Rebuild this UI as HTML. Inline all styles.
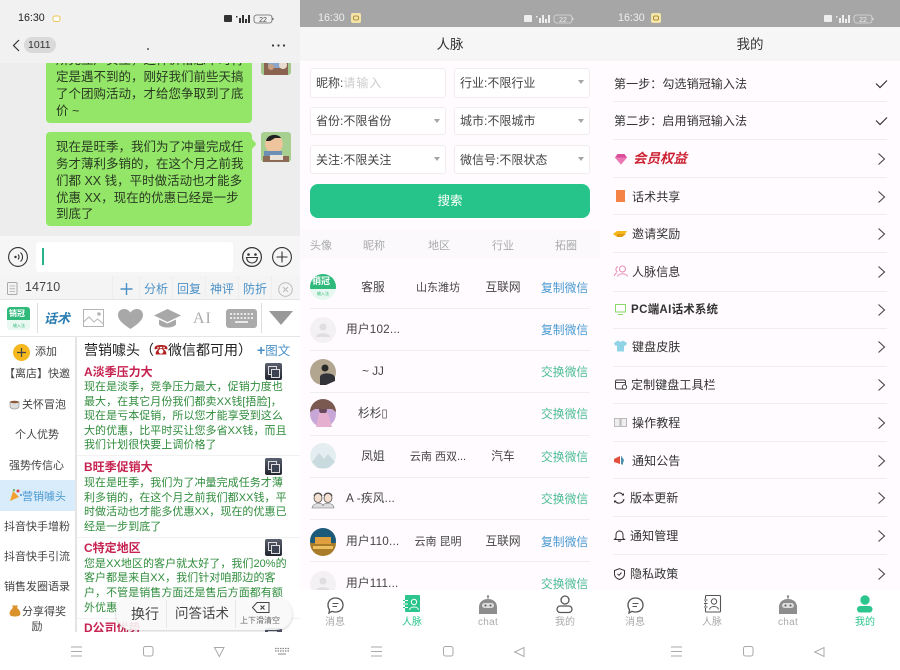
<!DOCTYPE html>
<html lang="zh"><head><meta charset="utf-8"><title>销冠输入法</title>
<style>
html,body{margin:0;padding:0;width:900px;height:670px;overflow:hidden;background:#fff}
body{font-family:"Liberation Sans","Noto Sans CJK SC",sans-serif;color:#333;position:relative;filter:blur(.35px)}
.p{position:absolute;top:0;height:670px;width:300px;overflow:hidden}
.a{position:absolute}
.t{position:absolute;white-space:nowrap;line-height:20px;height:20px}
.c{transform:translateX(-50%)}
svg{position:absolute;overflow:visible}
.l{position:absolute;height:1px;background:#eee}
.bx{position:absolute;background:#fff;border:1px solid #f0ecf0;border-radius:3px;box-sizing:border-box}
.ar{position:absolute;width:0;height:0;border-left:3.5px solid transparent;border-right:3.5px solid transparent;border-top:4px solid #a5a5a5}
.bub{position:absolute;left:46px;width:206px;background:#93e668;border-radius:4px}
.bt{font-size:12.5px;color:#2a3a22}
.g{font-size:11px;color:#2f8c3c;letter-spacing:.05px}
.r{font-size:12px;color:#c6224f;font-weight:bold}
.s{font-size:11px;color:#444}
.cp{position:absolute;left:265px;width:17px;height:17px;background:linear-gradient(#5a6070,#22252e);border-radius:2px}
.cp:after{content:"";position:absolute;left:3px;top:3px;width:7px;height:7px;border:1px solid #ddd}
.cp:before{content:"";position:absolute;left:6px;top:6px;width:7px;height:7px;border:1px solid #ddd;background:#3b4252;z-index:1}
.tb{font-size:12px;color:#4a90c6}
.m{font-size:11.7px;color:#444}
.w{font-size:11.8px}
.h{font-size:11px;color:#aaa}
.me{font-size:12px;color:#333;letter-spacing:.1px}
.tab{font-size:10px;color:#aaa}
.st{font-size:10.7px}
</style></head><body>

<!-- LEFT -->
<div class="p" style="left:0;background:#ededed">
 <div class="a" style="left:0;top:0;width:300px;height:63px;background:#f1f1f1"></div>
 <span class="t st" style="left:18px;top:8px;color:#222">16:30</span>
 <svg style="left:52px;top:15px" width="9" height="8"><rect x="1" y="1" width="7" height="5.500" rx="2" fill="#fff" stroke="#e8c454" stroke-width="1"/></svg>
 <svg style="left:224px;top:13px" width="54" height="11"><rect x="0" y="2" width="8" height="7" rx="1" fill="#333"/><rect x="12" y="3" width="1.500" height="1.500" fill="#333"/><rect x="15" y="5" width="2" height="5" fill="#333"/><rect x="18" y="2" width="2" height="8" fill="#333"/><rect x="21" y="6" width="2" height="4" fill="#333"/><rect x="24" y="2" width="2" height="8" fill="#333"/><rect x="30" y="2" width="18" height="8" rx="2.500" fill="none" stroke="#666" stroke-width=".8"/><rect x="48.500" y="5" width="1" height="2" fill="#666"/><text x="39" y="9" font-size="7" text-anchor="middle" fill="#444">22</text></svg>
 <svg style="left:12px;top:39px" width="8" height="13"><path d="M7 1L1.500 6.500L7 12" fill="none" stroke="#333" stroke-width="1.200"/></svg>
 <div class="a" style="left:24px;top:37px;width:32px;height:16px;background:#d9d9d9;border-radius:8px"></div>
 <span class="t" style="left:28px;top:35px;font-size:10.500px;color:#333">1011</span>
 <div class="a" style="left:147px;top:48px;width:2px;height:2px;background:#555;border-radius:1px"></div>
 <svg style="left:271px;top:44px" width="15" height="3"><circle cx="2" cy="1.500" r="1.100" fill="#333"/><circle cx="7.500" cy="1.500" r="1.100" fill="#333"/><circle cx="13" cy="1.500" r="1.100" fill="#333"/></svg>

 <div class="a" style="left:0;top:63px;width:300px;height:173px;overflow:hidden">
  <div class="bub" style="top:-12px;height:71.500px"></div>
  <div class="bub" style="top:69px;height:94px"></div>
  <span class="t bt" style="left:56px;top:-13px">所充立产实立，这样价格您平时肯</span>
  <span class="t bt" style="left:56px;top:4px">定是遇不到的，刚好我们前些天搞</span>
  <span class="t bt" style="left:56px;top:21px">了个团购活动，才给您争取到了底</span>
  <span class="t bt" style="left:56px;top:38px">价 ~</span>
  <span class="t bt" style="left:56px;top:74px">现在是旺季，我们为了冲量完成任</span>
  <span class="t bt" style="left:56px;top:91px">务才薄利多销的，在这个月之前我</span>
  <span class="t bt" style="left:56px;top:108px">们都 XX 钱，平时做活动也才能多</span>
  <span class="t bt" style="left:56px;top:125px">优惠 XX，现在的优惠已经是一步</span>
  <span class="t bt" style="left:56px;top:141px">到底了</span>
  <svg style="left:252px;top:76px" width="5" height="10"><path d="M0 0L4.500 5L0 10Z" fill="#93e668"/></svg>
  <!-- avatars -->
  <svg style="left:261px;top:-18px" width="30" height="30"><rect width="30" height="30" rx="3" fill="#a6c88f"/><rect x="3" y="10" width="24" height="20" fill="#8a6450"/><rect x="7" y="12" width="15" height="11" fill="#8aa7c9"/><circle cx="10" cy="22" r="3" fill="#c9a182"/><circle cx="22" cy="20" r="4" fill="#e8dccf"/></svg>
  <svg style="left:261px;top:69px" width="30" height="30"><rect width="30" height="30" rx="3" fill="#a6cf90"/><ellipse cx="13" cy="12" rx="9" ry="9" fill="#edc49b"/><path d="M5 9C6 2 17 1 20 6L14 6L9 9Z" fill="#222"/><rect x="3" y="19" width="18" height="8" fill="#6d8fb5"/><rect x="2" y="24" width="26" height="6" fill="#8c6a55"/><rect x="9" y="23" width="13" height="5" fill="#e9e2d6"/></svg>
 </div>

 <!-- input bar -->
 <div class="a" style="left:0;top:236px;width:300px;height:40px;background:#f6f6f6"></div>
 <div class="a" style="left:36px;top:242px;width:197px;height:30px;background:#fff;border-radius:3px"></div>
 <div class="a" style="left:42px;top:248px;width:1.500px;height:17px;background:#25b48a"></div>
 <svg style="left:8px;top:247px" width="20" height="20"><circle cx="10" cy="10" r="9.400" fill="none" stroke="#333" stroke-width="1.100"/><path d="M10 7.500A3.500 3.500 0 0 1 10 12.500M12.500 5.500A6 6 0 0 1 12.500 14.500" fill="none" stroke="#333" stroke-width="1.100"/><circle cx="7.500" cy="10" r="1.200" fill="#333"/></svg>
 <svg style="left:242px;top:247px" width="20" height="20"><circle cx="10" cy="10" r="9.400" fill="none" stroke="#333" stroke-width="1.200"/><circle cx="6.500" cy="7.500" r="1.300" fill="#333"/><circle cx="13.500" cy="7.500" r="1.300" fill="#333"/><path d="M4.500 10.500H15.500C15 14.500 12.500 16 10 16C7.500 16 5 14.500 4.500 10.500Z" fill="none" stroke="#333" stroke-width="1.100"/></svg>
 <svg style="left:272px;top:247px" width="20" height="20"><circle cx="10" cy="10" r="9.400" fill="none" stroke="#333" stroke-width="1.100"/><path d="M10 4.500V15.500M4.500 10H15.500" stroke="#333" stroke-width="1.100"/></svg>

 <!-- candidate bar -->
 <div class="a" style="left:0;top:276px;width:300px;height:24px;background:#f4f4f4"></div>
 <svg style="left:7px;top:282px" width="11" height="14"><rect x=".5" y=".5" width="9.500" height="12" rx="1" fill="none" stroke="#aaa"/><path d="M2.500 4H8M2.500 6.800H8M2.500 9.500H8" stroke="#aaa" stroke-width=".8"/></svg>
 <span class="t" style="left:25px;top:277px;font-size:12.500px;color:#444;letter-spacing:.1px">14710</span>
 <div class="a" style="left:112px;top:276px;width:1px;height:24px;background:#eee"></div>
 <div class="a" style="left:139px;top:276px;width:1px;height:24px;background:#eee"></div>
 <div class="a" style="left:172px;top:276px;width:1px;height:24px;background:#eee"></div>
 <div class="a" style="left:205px;top:276px;width:1px;height:24px;background:#eee"></div>
 <div class="a" style="left:238px;top:276px;width:1px;height:24px;background:#eee"></div>
 <div class="a" style="left:271px;top:276px;width:1px;height:24px;background:#eee"></div>
 <svg style="left:120px;top:283px" width="13" height="13"><path d="M6.500 0V12M.5 6H12.500" stroke="#4a90c6" stroke-width="1.400"/></svg>
 <span class="t tb" style="left:144px;top:279px">分析</span>
 <span class="t tb" style="left:177px;top:279px">回复</span>
 <span class="t tb" style="left:210px;top:279px">神评</span>
 <span class="t tb" style="left:243px;top:279px">防折</span>
 <svg style="left:278px;top:282px" width="15" height="15"><circle cx="7.500" cy="7.500" r="6.800" fill="none" stroke="#bbb"/><path d="M5 5L10 10M10 5L5 10" stroke="#bbb"/></svg>

 <!-- toolbar -->
 <div class="a" style="left:0;top:299px;width:300px;height:38px;background:#fff;border-top:1px solid #e5e5e5;border-bottom:1px solid #e5e5e5;box-sizing:border-box"></div>
 <div class="a" style="left:7px;top:307px;width:23px;height:23px;border-radius:3px;background:#e9f8f0;overflow:hidden"><div class="a" style="left:0;top:0;width:23px;height:13px;background:#2fb97a"></div><span class="t" style="left:2px;top:-3px;font-size:8px;color:#fff;font-weight:bold">销冠</span><span class="t" style="left:6px;top:9px;font-size:4px;color:#2fb97a">输入法</span></div>
 <div class="a" style="left:37px;top:303px;width:1px;height:30px;background:#ddd"></div>
 <span class="t" style="left:44px;top:309px;font-size:13px;color:#2c7eb2;font-weight:bold;font-style:italic">话术</span>
 <svg style="left:83px;top:309px" width="21" height="19"><rect x=".5" y=".5" width="20" height="17" fill="none" stroke="#b5b5b5"/><path d="M.5 13L6 8L11 13L14.500 10L20.500 15" fill="none" stroke="#b5b5b5"/><circle cx="16" cy="5" r="1.800" fill="#b5b5b5"/></svg>
 <svg style="left:118px;top:309px" width="25" height="20"><path d="M12.500 20C5 15 0 11 0 6C0 2 3 0 6 0C9 0 11 1.500 12.500 3.500C14 1.500 16 0 19 0C22 0 25 2 25 6C25 11 20 15 12.500 20Z" fill="#a8a8a8"/></svg>
 <svg style="left:154px;top:309px" width="27" height="20"><path d="M13.500 0L27 6.500L13.500 13L0 6.500Z" fill="#a8a8a8"/><path d="M5 10.500V15.500C8 19.500 19 19.500 22 15.500V10.500L13.500 14.500Z" fill="#a8a8a8"/></svg>
 <span class="t" style="left:193px;top:309px;font-size:16px;color:#aaa;font-family:'Liberation Serif',serif;letter-spacing:1px">AI</span>
 <div class="a" style="left:226px;top:309px;width:31px;height:19px;background:#aaa;border-radius:3px"></div>
 <svg style="left:229px;top:312px" width="25" height="13"><path d="M1 2H24M1 6H24" stroke="#e8e8e8" stroke-width="2" stroke-dasharray="2 1.500"/><path d="M6 10H19" stroke="#e8e8e8" stroke-width="2"/></svg>
 <div class="a" style="left:261px;top:303px;width:1px;height:30px;background:#ddd"></div>
 <svg style="left:269px;top:311px" width="24" height="14"><path d="M0 0H24L12 14Z" fill="#999"/></svg>

 <!-- sidebar & content -->
 <div class="a" style="left:0;top:337px;width:300px;height:295px;background:#fff;overflow:hidden">
  <div class="a" style="left:75px;top:0;width:2px;height:295px;background:#e4e4e4"></div>
  <div class="a" style="left:0;top:143px;width:75px;height:31px;background:#d9ecfb"></div>
  <div class="a" style="left:13px;top:7px;width:17px;height:17px;border-radius:9px;background:#f5b81f"></div>
  <svg style="left:17px;top:11px" width="9" height="9"><path d="M4.500 0V9M0 4.500H9" stroke="#444" stroke-width="1.200"/></svg>
  <span class="t s" style="left:35px;top:5px">添加</span>
  <span class="t s" style="left:4px;top:27px">【离店】快邀</span>
  <span class="t s" style="left:22px;top:58px">关怀冒泡</span>
  <svg style="left:9px;top:61px" width="12" height="12"><path d="M1 4H10V8C10 10 8 11 5.500 11C3 11 1 10 1 8Z" fill="#ddd" stroke="#999" stroke-width=".7"/><ellipse cx="5.500" cy="4" rx="4.500" ry="1.200" fill="#8a5a3a"/></svg>
  <span class="t s" style="left:15px;top:88px">个人优势</span>
  <span class="t s" style="left:9px;top:119px">强势传信心</span>
  <svg style="left:9px;top:151px" width="13" height="14"><path d="M1 13L4 3L10 9Z" fill="#f0a030"/><circle cx="9" cy="3" r="1.500" fill="#d44"/><circle cx="12" cy="7" r="1" fill="#48c"/><circle cx="5" cy="2" r="1" fill="#4a4"/></svg>
  <span class="t s" style="left:22px;top:150px;color:#4a9ad0">营销噱头</span>
  <span class="t s" style="left:4px;top:180px">抖音快手增粉</span>
  <span class="t s" style="left:4px;top:210px">抖音快手引流</span>
  <span class="t s" style="left:4px;top:240px">销售发圈语录</span>
  <svg style="left:9px;top:268px" width="12" height="13"><path d="M4 3L3 0.500H9L8 3C11 5 12 8 11 10C10 12 2 12 1 10C0 8 1 5 4 3Z" fill="#d9932a"/></svg>
  <span class="t s" style="left:22px;top:265px">分享得奖</span>
  <span class="t s c" style="left:37px;top:280px">励</span>

  <span class="t" style="left:84px;top:3px;font-size:14px;color:#222">营销噱头（<span style="color:#b02020">☎</span>微信都可用）</span>
  <span class="t" style="left:257px;top:3px;font-size:12.500px;color:#4a90c6"><b style="font-size:14px">+</b>图文</span>

  <span class="t r" style="left:84px;top:25px">A淡季压力大</span>
  <div class="cp" style="top:26px"></div>
  <span class="t g" style="left:84px;top:40px">现在是淡季，竞争压力最大，促销力度也</span>
  <span class="t g" style="left:84px;top:55px">最大，在其它月份我们都卖XX钱[捂脸]，</span>
  <span class="t g" style="left:84px;top:69px">现在是亏本促销，所以您才能享受到这么</span>
  <span class="t g" style="left:84px;top:84px">大的优惠，比平时买让您多省XX钱，而且</span>
  <span class="t g" style="left:84px;top:98px">我们计划很快要上调价格了</span>
  <div class="l" style="left:77px;top:118px;width:223px;background:#f2f2f2"></div>

  <span class="t r" style="left:84px;top:120px">B旺季促销大</span>
  <div class="cp" style="top:121px"></div>
  <span class="t g" style="left:84px;top:136px">现在是旺季，我们为了冲量完成任务才薄</span>
  <span class="t g" style="left:84px;top:151px">利多销的，在这个月之前我们都XX钱，平</span>
  <span class="t g" style="left:84px;top:165px">时做活动也才能多优惠XX，现在的优惠已</span>
  <span class="t g" style="left:84px;top:180px">经是一步到底了</span>
  <div class="l" style="left:77px;top:200px;width:223px;background:#f2f2f2"></div>

  <span class="t r" style="left:84px;top:201px">C特定地区</span>
  <div class="cp" style="top:202px"></div>
  <span class="t g" style="left:84px;top:217px">您是XX地区的客户就太好了，我们20%的</span>
  <span class="t g" style="left:84px;top:231px">客户都是来自XX，我们针对咱那边的客</span>
  <span class="t g" style="left:84px;top:246px">户，不管是销售方面还是售后方面都有额</span>
  <span class="t g" style="left:84px;top:261px">外优惠</span>
  <div class="l" style="left:77px;top:281px;width:223px;background:#f2f2f2"></div>

  <span class="t r" style="left:84px;top:281px">D公司优势</span>
  <div class="cp" style="top:291px"></div>

  <div class="a" style="left:116px;top:261px;width:176px;height:32px;background:rgba(248,248,248,.9);border-radius:16px;box-shadow:0 1px 3px rgba(0,0,0,.2)"></div>
  <div class="a" style="left:166px;top:263px;width:1px;height:28px;background:#e8e8e8"></div>
  <div class="a" style="left:235px;top:263px;width:1px;height:28px;background:#e8e8e8"></div>
  <span class="t" style="left:131px;top:267px;font-size:14px;color:#444">换行</span>
  <span class="t" style="left:175px;top:267px;font-size:13.500px;color:#444">问答话术</span>
  <svg style="left:252px;top:265px" width="18" height="11"><path d="M5 .5H17V10.500H5L.5 5.500Z" fill="none" stroke="#444" stroke-width="1"/><path d="M8.500 3.500L12.500 7.500M12.500 3.500L8.500 7.500" stroke="#444" stroke-width="1.200"/></svg>
  <span class="t c" style="left:260px;top:274px;font-size:8px;color:#666">上下滑清空</span>
 </div>

 <!-- nav -->
 <div class="a" style="left:0;top:632px;width:300px;height:38px;background:#fff"></div>
 <svg style="left:70px;top:646px" width="13" height="11"><path d="M1 1H12M1 5.500H12M1 10H12" stroke="#aaa" stroke-width="1"/></svg>
 <svg style="left:143px;top:646px" width="11" height="11"><rect x=".5" y=".5" width="9.500" height="9.500" rx="2" fill="none" stroke="#aaa"/></svg>
 <svg style="left:214px;top:647px" width="11" height="10"><path d="M.5 .5H10L5.300 9.500Z" fill="none" stroke="#aaa"/></svg>
 <svg style="left:275px;top:647px" width="14" height="8"><path d="M0 1.500H14M0 4H14" stroke="#888" stroke-width="1.300" stroke-dasharray="1.500 1"/><path d="M3 7H11" stroke="#888"/></svg>
</div>

<!-- MIDDLE -->
<div class="p" style="left:300px;background:#fffbfe">
 <div class="a" style="left:0;top:0;width:300px;height:27px;background:#a6a6a6"></div>
 <div class="a" style="left:0;top:27px;width:300px;height:34px;background:#f6f6f6"></div>
 <span class="t st" style="left:18px;top:8px;color:#eee">16:30</span>
 <svg style="left:51px;top:13px" width="11" height="11"><rect x="0" y="0" width="10" height="10" rx="2" fill="#f5e4a8"/><rect x="2.500" y="3" width="5" height="4" rx="1.500" fill="none" stroke="#9a7a20" stroke-width=".8"/></svg>
 <svg style="left:224px;top:13px" width="54" height="11"><rect x="0" y="2" width="8" height="7" rx="1" fill="#eee"/><rect x="12" y="3" width="1.500" height="1.500" fill="#eee"/><rect x="15" y="5" width="2" height="5" fill="#eee"/><rect x="18" y="2" width="2" height="8" fill="#eee"/><rect x="21" y="6" width="2" height="4" fill="#eee"/><rect x="24" y="2" width="2" height="8" fill="#eee"/><rect x="30" y="2" width="18" height="8" rx="2.500" fill="none" stroke="#ddd" stroke-width=".8"/><rect x="48.500" y="5" width="1" height="2" fill="#ddd"/><text x="39" y="9" font-size="7" text-anchor="middle" fill="#eee">22</text></svg>
 <span class="t c" style="left:150px;top:35px;font-size:13.500px;color:#333">人脉</span>

 <div class="bx" style="left:10px;top:68px;width:136px;height:30px"></div>
 <div class="bx" style="left:154px;top:68px;width:136px;height:30px"></div>
 <div class="bx" style="left:10px;top:107px;width:136px;height:28px"></div>
 <div class="bx" style="left:154px;top:107px;width:136px;height:28px"></div>
 <div class="bx" style="left:10px;top:145px;width:136px;height:29px"></div>
 <div class="bx" style="left:154px;top:145px;width:136px;height:29px"></div>
 <span class="t" style="left:16px;top:73px;font-size:12px;color:#444">昵称:<span style="color:#ccc;letter-spacing:1px">请输入</span></span>
 <span class="t" style="left:160px;top:73px;font-size:12px;color:#444">行业:不限行业</span>
 <span class="t" style="left:16px;top:111px;font-size:12px;color:#444">省份:不限省份</span>
 <span class="t" style="left:160px;top:111px;font-size:12px;color:#444">城市:不限城市</span>
 <span class="t" style="left:16px;top:150px;font-size:12px;color:#444">关注:不限关注</span>
 <span class="t" style="left:160px;top:150px;font-size:12px;color:#444">微信号:不限状态</span>
 <div class="ar" style="left:278px;top:80px"></div>
 <div class="ar" style="left:134px;top:119px"></div>
 <div class="ar" style="left:278px;top:119px"></div>
 <div class="ar" style="left:134px;top:157px"></div>
 <div class="ar" style="left:278px;top:157px"></div>
 <div class="a" style="left:10px;top:184px;width:280px;height:34px;background:#26c48b;border-radius:8px"></div>
 <span class="t c" style="left:150px;top:191px;font-size:12.500px;color:#fff">搜索</span>

 <div class="a" style="left:0;top:229px;width:300px;height:30px;background:#fbf9fc"></div>
 <span class="t h c" style="left:21px;top:236px">头像</span>
 <span class="t h c" style="left:74px;top:236px">昵称</span>
 <span class="t h c" style="left:139px;top:236px">地区</span>
 <span class="t h c" style="left:203px;top:236px">行业</span>
 <span class="t h c" style="left:266px;top:236px">拓圈</span>

 <div class="l" style="left:10px;top:308px;width:280px"></div>
 <div class="l" style="left:10px;top:350px;width:280px"></div>
 <div class="l" style="left:10px;top:392px;width:280px"></div>
 <div class="l" style="left:10px;top:435px;width:280px"></div>
 <div class="l" style="left:10px;top:477px;width:280px"></div>
 <div class="l" style="left:10px;top:519px;width:280px"></div>
 <div class="l" style="left:10px;top:561px;width:280px"></div>

 <!-- avatars -->
 <div class="a" style="left:10px;top:274px;width:26px;height:26px;border-radius:13px;background:#e6f8ef;overflow:hidden"><div class="a" style="left:0;top:0;width:26px;height:15px;background:#2fb97a"></div><span class="t" style="left:2px;top:-3px;font-size:9px;font-weight:bold;color:#fff">销冠</span><span class="t" style="left:7px;top:10px;font-size:4px;color:#2fb97a">输入法</span></div>
 <svg style="left:10px;top:317px" width="26" height="26"><circle cx="13" cy="13" r="13" fill="#f3f1f3"/><circle cx="13" cy="10" r="3.500" fill="#e0dee0"/><path d="M6 20C6 15 20 15 20 20Z" fill="#e0dee0"/></svg>
 <svg style="left:10px;top:359px" width="26" height="26"><circle cx="13" cy="13" r="13" fill="#b2a691"/><circle cx="15" cy="9" r="3.500" fill="#2a2a2a"/><path d="M10 26V18C10 13 25 13 25 19V22L16 26Z" fill="#33343a"/></svg>
 <svg style="left:10px;top:401px" width="26" height="26"><circle cx="13" cy="13" r="13" fill="#c7a7d8"/><circle cx="13" cy="9" r="4" fill="#6a4a5a"/><path d="M6 26L9 12H18L22 26Z" fill="#e5b0d0"/><path d="M0 11A13 13 0 0 1 26 11L22 8H5Z" fill="#7a5a50"/></svg>
 <svg style="left:10px;top:443px" width="26" height="26"><circle cx="13" cy="13" r="13" fill="#e4eef0"/><path d="M2 19L9 10L14 16L18 11L25 19L18 25H8Z" fill="#c9dadf"/></svg>
 <svg style="left:10px;top:486px" width="26" height="26"><ellipse cx="8" cy="12" rx="4" ry="4.500" fill="#f4e0d0" stroke="#555" stroke-width=".8"/><ellipse cx="18" cy="12" rx="4" ry="4.500" fill="#f4e0d0" stroke="#555" stroke-width=".8"/><path d="M2 22C3 16 13 16 13 20C13 16 24 16 24 22Z" fill="#ddd" stroke="#777" stroke-width=".6"/><path d="M4 10C5 6 11 6 12 10M14 10C15 6 21 6 22 10" stroke="#555" fill="none"/></svg>
 <svg style="left:10px;top:528px" width="26" height="26"><circle cx="13" cy="13" r="13" fill="#1b5a78"/><path d="M0 15H26A13 13 0 0 1 0 15Z" fill="#a97c2a"/><rect x="5" y="9" width="16" height="7" fill="#e0a040"/><rect x="3" y="18" width="20" height="3" fill="#ecc060"/></svg>
 <svg style="left:10px;top:571px" width="26" height="26"><circle cx="13" cy="13" r="13" fill="#f3f1f3"/><circle cx="13" cy="10" r="3.500" fill="#e0dee0"/><path d="M6 20C6 15 20 15 20 20Z" fill="#e0dee0"/></svg>

 <span class="t m c" style="left:73px;top:278px">客服</span><span class="t m c" style="left:138px;top:278px;font-size:11px">山东潍坊</span><span class="t m c" style="left:203px;top:278px">互联网</span><span class="t w" style="left:241px;top:278px;color:#4a9ad0">复制微信</span>
 <span class="t m" style="left:46px;top:320px;letter-spacing:.2px">用户102...</span><span class="t w" style="left:241px;top:320px;color:#4a9ad0">复制微信</span>
 <span class="t m c" style="left:73px;top:362px">~ JJ</span><span class="t w" style="left:241px;top:362px;color:#4cbd95">交换微信</span>
 <span class="t m" style="left:58px;top:404px">杉杉▯</span><span class="t w" style="left:241px;top:404px;color:#4cbd95">交换微信</span>
 <span class="t m c" style="left:73px;top:447px">凤姐</span><span class="t m c" style="left:138px;top:447px;font-size:11px">云南 西双...</span><span class="t m c" style="left:203px;top:447px">汽车</span><span class="t w" style="left:241px;top:447px;color:#4cbd95">交换微信</span>
 <span class="t m" style="left:46px;top:489px;letter-spacing:.2px">A -疾风...</span><span class="t w" style="left:241px;top:489px;color:#4cbd95">交换微信</span>
 <span class="t m" style="left:46px;top:532px;letter-spacing:.2px">用户110...</span><span class="t m c" style="left:138px;top:532px;font-size:11px">云南 昆明</span><span class="t m c" style="left:203px;top:532px">互联网</span><span class="t w" style="left:241px;top:532px;color:#4a9ad0">复制微信</span>
 <span class="t m" style="left:46px;top:574px;letter-spacing:.2px">用户111...</span><span class="t w" style="left:241px;top:574px;color:#4cbd95">交换微信</span>

 <!-- tab bar -->
 <div class="a" style="left:0;top:590px;width:300px;height:80px;background:#fff"></div>
 <svg style="left:27px;top:597px" width="17" height="17"><path d="M8.500 1C13 1 16 4 16 8C16 12 13 15 8.500 15C7 15 6 14.800 5 14.300L2 16L2.500 12.800C1.500 11.500 1 9.800 1 8C1 4 4 1 8.500 1Z" fill="none" stroke="#555" stroke-width="1.300"/><path d="M5.500 6.500H11.500M5.500 9.500H10" stroke="#555" stroke-width="1.100"/></svg>
 <span class="t tab c" style="left:35px;top:613px">消息</span>
 <div class="a" style="left:105px;top:595px;width:15px;height:17px;background:#2bc58d;border-radius:1px"></div>
 <svg style="left:103px;top:597px" width="17" height="15"><circle cx="11" cy="5" r="2.700" fill="none" stroke="#fff" stroke-width="1"/><path d="M6.500 13C7 9 15 9 15.500 13" fill="none" stroke="#fff" stroke-width="1"/><path d="M0 3.500H4M0 7H4M0 10.500H4" stroke="#2bc58d" stroke-width="1.100"/><path d="M2 3.500H5M2 7H5M2 10.500H5" stroke="#fff" stroke-width=".9"/></svg>
 <span class="t tab c" style="left:112px;top:613px;color:#2bc58d">人脉</span>
 <svg style="left:178px;top:595px" width="20" height="20"><circle cx="10" cy="1.500" r="1.200" fill="#888"/><path d="M10 2V5" stroke="#888"/><path d="M1 19V12C1 7 5 4 10 4C15 4 19 7 19 12V19Z" fill="#8d8d8d"/><rect x="4" y="8" width="12" height="5" rx="2.500" fill="#dcdcdc"/><circle cx="7.500" cy="10.500" r="1" fill="#555"/><circle cx="12.500" cy="10.500" r="1" fill="#555"/></svg>
 <span class="t tab c" style="left:188px;top:613px;letter-spacing:.3px">chat</span>
 <svg style="left:256px;top:595px" width="18" height="19"><circle cx="9" cy="5" r="4" fill="none" stroke="#555" stroke-width="1.300"/><rect x="1" y="11" width="15" height="6.500" rx="3.200" fill="none" stroke="#555" stroke-width="1.300"/></svg>
 <span class="t tab c" style="left:265px;top:613px">我的</span>

 <svg style="left:70px;top:646px" width="13" height="11"><path d="M1 1H12M1 5.500H12M1 10H12" stroke="#aaa"/></svg>
 <svg style="left:143px;top:646px" width="11" height="11"><rect x=".5" y=".5" width="9.500" height="9.500" rx="2" fill="none" stroke="#aaa"/></svg>
 <svg style="left:214px;top:647px" width="11" height="10"><path d="M10 .5V9.500L.7 5Z" fill="none" stroke="#aaa"/></svg>
</div>

<!-- RIGHT -->
<div class="p" style="left:600px;background:#fffbfe">
 <div class="a" style="left:0;top:0;width:300px;height:27px;background:#a6a6a6"></div>
 <div class="a" style="left:0;top:27px;width:300px;height:34px;background:#f6f6f6"></div>
 <span class="t st" style="left:18px;top:8px;color:#eee">16:30</span>
 <svg style="left:51px;top:13px" width="11" height="11"><rect x="0" y="0" width="10" height="10" rx="2" fill="#f5e4a8"/><rect x="2.500" y="3" width="5" height="4" rx="1.500" fill="none" stroke="#9a7a20" stroke-width=".8"/></svg>
 <svg style="left:224px;top:13px" width="54" height="11"><rect x="0" y="2" width="8" height="7" rx="1" fill="#eee"/><rect x="12" y="3" width="1.500" height="1.500" fill="#eee"/><rect x="15" y="5" width="2" height="5" fill="#eee"/><rect x="18" y="2" width="2" height="8" fill="#eee"/><rect x="21" y="6" width="2" height="4" fill="#eee"/><rect x="24" y="2" width="2" height="8" fill="#eee"/><rect x="30" y="2" width="18" height="8" rx="2.500" fill="none" stroke="#ddd" stroke-width=".8"/><rect x="48.500" y="5" width="1" height="2" fill="#ddd"/><text x="39" y="9" font-size="7" text-anchor="middle" fill="#eee">22</text></svg>
 <span class="t c" style="left:150px;top:35px;font-size:13.500px;color:#333">我的</span>

 <div class="l" style="left:13px;top:101px;width:274px"></div>
 <div class="l" style="left:13px;top:139px;width:274px"></div>
 <div class="l" style="left:13px;top:177px;width:274px"></div>
 <div class="l" style="left:13px;top:214px;width:274px"></div>
 <div class="l" style="left:13px;top:252px;width:274px"></div>
 <div class="l" style="left:13px;top:291px;width:274px"></div>
 <div class="l" style="left:13px;top:328px;width:274px"></div>
 <div class="l" style="left:13px;top:366px;width:274px"></div>
 <div class="l" style="left:13px;top:403px;width:274px"></div>
 <div class="l" style="left:13px;top:441px;width:274px"></div>
 <div class="l" style="left:13px;top:478px;width:274px"></div>
 <div class="l" style="left:13px;top:516px;width:274px"></div>
 <div class="l" style="left:13px;top:554px;width:274px"></div>

 <span class="t me" style="left:14px;top:74px">第一步：勾选销冠输入法</span>
 <span class="t me" style="left:14px;top:111px">第二步：启用销冠输入法</span>
 <span class="t" style="left:33px;top:149px;font-size:13.500px;font-weight:bold;font-style:italic;color:#cc2233">会员权益</span>
 <span class="t me" style="left:32px;top:187px">话术共享</span>
 <span class="t me" style="left:32px;top:224px">邀请奖励</span>
 <span class="t me" style="left:32px;top:262px">人脉信息</span>
 <span class="t me" style="left:31px;top:300px;font-weight:bold;font-size:11.500px"><span style="letter-spacing:.4px">PC</span>端<span style="letter-spacing:.4px">AI</span>话术系统</span>
 <span class="t me" style="left:32px;top:337px">键盘皮肤</span>
 <span class="t me" style="left:31px;top:375px">定制键盘工具栏</span>
 <span class="t me" style="left:32px;top:413px">操作教程</span>
 <span class="t me" style="left:32px;top:451px">通知公告</span>
 <span class="t me" style="left:30px;top:488px">版本更新</span>
 <span class="t me" style="left:30px;top:526px">通知管理</span>
 <span class="t me" style="left:30px;top:564px">隐私政策</span>

 <!-- check marks -->
 <svg style="left:275px;top:79px" width="13" height="10"><path d="M1 4.500L5 8.500L12 1.500" fill="none" stroke="#333" stroke-width="1.200"/></svg>
 <svg style="left:275px;top:116px" width="13" height="10"><path d="M1 4.500L5 8.500L12 1.500" fill="none" stroke="#333" stroke-width="1.200"/></svg>
 <!-- chevrons -->
 <svg style="left:277px;top:152px" width="9" height="14"><path d="M1.500 1.500L7.500 7L1.500 12.500" fill="none" stroke="#444" stroke-width="1.100"/></svg>
 <svg style="left:277px;top:190px" width="9" height="14"><path d="M1.500 1.500L7.500 7L1.500 12.500" fill="none" stroke="#444" stroke-width="1.100"/></svg>
 <svg style="left:277px;top:227px" width="9" height="14"><path d="M1.500 1.500L7.500 7L1.500 12.500" fill="none" stroke="#444" stroke-width="1.100"/></svg>
 <svg style="left:277px;top:265px" width="9" height="14"><path d="M1.500 1.500L7.500 7L1.500 12.500" fill="none" stroke="#444" stroke-width="1.100"/></svg>
 <svg style="left:277px;top:303px" width="9" height="14"><path d="M1.500 1.500L7.500 7L1.500 12.500" fill="none" stroke="#444" stroke-width="1.100"/></svg>
 <svg style="left:277px;top:340px" width="9" height="14"><path d="M1.500 1.500L7.500 7L1.500 12.500" fill="none" stroke="#444" stroke-width="1.100"/></svg>
 <svg style="left:277px;top:378px" width="9" height="14"><path d="M1.500 1.500L7.500 7L1.500 12.500" fill="none" stroke="#444" stroke-width="1.100"/></svg>
 <svg style="left:277px;top:416px" width="9" height="14"><path d="M1.500 1.500L7.500 7L1.500 12.500" fill="none" stroke="#444" stroke-width="1.100"/></svg>
 <svg style="left:277px;top:454px" width="9" height="14"><path d="M1.500 1.500L7.500 7L1.500 12.500" fill="none" stroke="#444" stroke-width="1.100"/></svg>
 <svg style="left:277px;top:491px" width="9" height="14"><path d="M1.500 1.500L7.500 7L1.500 12.500" fill="none" stroke="#444" stroke-width="1.100"/></svg>
 <svg style="left:277px;top:529px" width="9" height="14"><path d="M1.500 1.500L7.500 7L1.500 12.500" fill="none" stroke="#444" stroke-width="1.100"/></svg>
 <svg style="left:277px;top:567px" width="9" height="14"><path d="M1.500 1.500L7.500 7L1.500 12.500" fill="none" stroke="#444" stroke-width="1.100"/></svg>

 <!-- row icons -->
 <svg style="left:15px;top:153px" width="12" height="12"><path d="M2.500 1H9.500L12 4.500L6 11.500L0 4.500Z" fill="#d94d9a"/><path d="M0 4.500H12L6 11.500Z" fill="#ea76b4"/></svg>
 <div class="a" style="left:16px;top:190px;width:9px;height:12px;background:#f58345"></div>
 <svg style="left:13px;top:229px" width="15" height="10"><path d="M0 5L4 2H14L12 5L9 8H4Z" fill="#f4b71c"/><path d="M4 5H13L9 8H4Z" fill="#e09a10"/></svg>
 <svg style="left:14px;top:265px" width="14" height="12"><circle cx="8.500" cy="4" r="3" fill="none" stroke="#ea8cb2" stroke-width="1"/><path d="M3.500 11.500C4 8 13 8 13.500 11.500" fill="none" stroke="#ea8cb2" stroke-width="1"/><path d="M4 1.500A3 3 0 0 0 3.500 7M.5 11C.5 9 2 8 3 8" fill="none" stroke="#ea8cb2" stroke-width="1"/></svg>
 <svg style="left:15px;top:304px" width="11" height="11"><rect x=".5" y=".5" width="10" height="7.500" fill="none" stroke="#8bd96b" stroke-width="1"/><path d="M3 10.500H8" stroke="#8bd96b" stroke-width="1"/></svg>
 <svg style="left:14px;top:340px" width="13" height="12"><path d="M4 .5L6.500 2L9 .5L13 3L11.500 6L10 5.500V11.500H3V5.500L1.500 6L0 3Z" fill="#8fd4e6"/></svg>
 <svg style="left:15px;top:379px" width="13" height="11"><rect x=".5" y="1" width="10" height="9" rx="1.500" fill="none" stroke="#444"/><path d="M.5 3.500H10.500" stroke="#444"/><circle cx="9.500" cy="8" r="2.200" fill="#fff" stroke="#444"/></svg>
 <svg style="left:14px;top:418px" width="13" height="9"><path d="M.5 .5H6V8.500H.5ZM7 .5H12.500V8.500H7Z" fill="#eee" stroke="#aaa" stroke-width=".8"/></svg>
 <svg style="left:14px;top:455px" width="13" height="11"><path d="M0 4L6 1V9L0 7Z" fill="#e2503d"/><path d="M7 .5L10 5L8.500 10L7 9Z" fill="#4a8ea8"/></svg>
 <svg style="left:13px;top:492px" width="12" height="12"><path d="M1 5A5 5 0 0 1 10 3M11 7A5 5 0 0 1 2 9" fill="none" stroke="#333" stroke-width="1.100"/><path d="M8.500 3.500L11 3.500L11 1ZM3.500 8.500L1 8.500L1 11Z" fill="#333"/></svg>
 <svg style="left:14px;top:530px" width="11" height="12"><path d="M5.500 1C8 1 9 3 9 5V8L10.500 9.500H.5L2 8V5C2 3 3 1 5.500 1Z" fill="none" stroke="#333"/><path d="M4 10.500C4.500 11.500 6.500 11.500 7 10.500" fill="none" stroke="#333"/></svg>
 <svg style="left:14px;top:568px" width="11" height="12"><path d="M5.500 .7L10.500 2.500V6C10.500 9 8 10.700 5.500 11.500C3 10.700 .5 9 .5 6V2.500Z" fill="none" stroke="#333"/><path d="M3.500 5.800L5 7.300L7.500 4.600" fill="none" stroke="#333"/></svg>

 <!-- tab bar -->
 <div class="a" style="left:0;top:590px;width:300px;height:80px;background:#fff"></div>
 <svg style="left:27px;top:597px" width="17" height="17"><path d="M8.500 1C13 1 16 4 16 8C16 12 13 15 8.500 15C7 15 6 14.800 5 14.300L2 16L2.500 12.800C1.500 11.500 1 9.800 1 8C1 4 4 1 8.500 1Z" fill="none" stroke="#555" stroke-width="1.300"/><path d="M5.500 6.500H11.500M5.500 9.500H10" stroke="#555" stroke-width="1.100"/></svg>
 <span class="t tab c" style="left:35px;top:613px">消息</span>
 <svg style="left:103px;top:595px" width="18" height="18"><rect x="2.500" y=".5" width="15" height="16.500" rx="1" fill="none" stroke="#555" stroke-width="1.100"/><circle cx="11" cy="6.500" r="2.700" fill="none" stroke="#555"/><path d="M6.500 14.500C7 10.500 15 10.500 15.500 14.500" fill="none" stroke="#555"/><path d="M0 5H5M0 8.500H5M0 12H5" stroke="#fff" stroke-width="2"/><path d="M1 5H4.500M1 8.500H4.500M1 12H4.500" stroke="#555"/></svg>
 <span class="t tab c" style="left:112px;top:613px">人脉</span>
 <svg style="left:178px;top:595px" width="20" height="20"><circle cx="10" cy="1.500" r="1.200" fill="#888"/><path d="M10 2V5" stroke="#888"/><path d="M1 19V12C1 7 5 4 10 4C15 4 19 7 19 12V19Z" fill="#8d8d8d"/><rect x="4" y="8" width="12" height="5" rx="2.500" fill="#dcdcdc"/><circle cx="7.500" cy="10.500" r="1" fill="#555"/><circle cx="12.500" cy="10.500" r="1" fill="#555"/></svg>
 <span class="t tab c" style="left:188px;top:613px;letter-spacing:.3px">chat</span>
 <svg style="left:256px;top:595px" width="18" height="19"><circle cx="9" cy="5" r="4.700" fill="#2bc58d"/><rect x="1" y="11" width="15.500" height="6.500" rx="3.200" fill="#2bc58d"/></svg>
 <span class="t tab c" style="left:265px;top:613px;color:#2bc58d">我的</span>

 <svg style="left:70px;top:646px" width="13" height="11"><path d="M1 1H12M1 5.500H12M1 10H12" stroke="#aaa"/></svg>
 <svg style="left:143px;top:646px" width="11" height="11"><rect x=".5" y=".5" width="9.500" height="9.500" rx="2" fill="none" stroke="#aaa"/></svg>
 <svg style="left:214px;top:647px" width="11" height="10"><path d="M10 .5V9.500L.7 5Z" fill="none" stroke="#aaa"/></svg>
</div>
</body></html>
